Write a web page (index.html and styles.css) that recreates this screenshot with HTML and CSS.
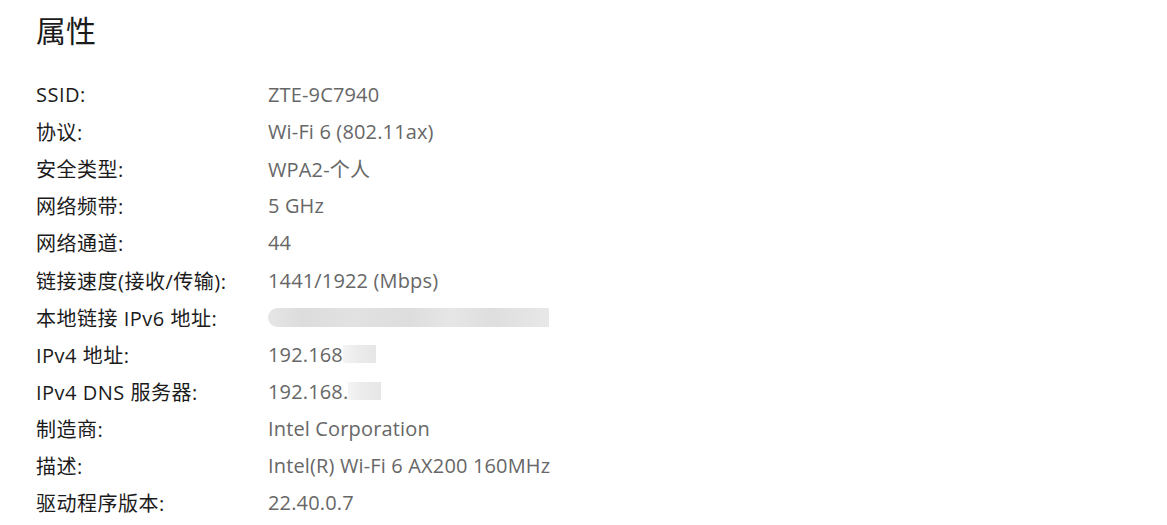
FILE: index.html
```html
<!DOCTYPE html>
<html lang="zh-CN">
<head>
<meta charset="utf-8">
<title>属性</title>
<link rel="stylesheet" href="styles.css">
</head>
<body>
<main class="panel">
  <h1 class="title">属性</h1>
  <dl class="props">
    <div class="row"><dt>SSID:</dt><dd>ZTE-9C7940</dd></div>
    <div class="row"><dt>协议:</dt><dd>Wi-Fi 6 (802.11ax)</dd></div>
    <div class="row"><dt>安全类型:</dt><dd>WPA2-个人</dd></div>
    <div class="row"><dt>网络频带:</dt><dd>5 GHz</dd></div>
    <div class="row"><dt>网络通道:</dt><dd>44</dd></div>
    <div class="row"><dt>链接速度(接收/传输):</dt><dd>1441/1922 (Mbps)</dd></div>
    <div class="row"><dt>本地链接 IPv6 地址:</dt><dd><span class="blur-long"></span></dd></div>
    <div class="row"><dt>IPv4 地址:</dt><dd>192.168<span class="blur-short"></span></dd></div>
    <div class="row"><dt>IPv4 DNS 服务器:</dt><dd>192.168.<span class="blur-short"></span></dd></div>
    <div class="row"><dt>制造商:</dt><dd>Intel Corporation</dd></div>
    <div class="row"><dt>描述:</dt><dd>Intel(R) Wi-Fi 6 AX200 160MHz</dd></div>
    <div class="row"><dt>驱动程序版本:</dt><dd>22.40.0.7</dd></div>
  </dl>
</main>
</body>
</html>
```

FILE: styles.css
```css
html, body {
  margin: 0;
  padding: 0;
  background: #ffffff;
}
body {
  font-family: "Open Sans", "Noto Sans", "Noto Sans CJK SC", sans-serif;
  color: #1b1b1b;
}
.panel {
  padding: 9px 0 0 36px;
}
.title {
  margin: 0;
  font-size: 30px;
  font-weight: 400;
  line-height: 40px;
  font-family: "Noto Sans CJK SC", sans-serif;
}
.props {
  margin: 27px 0 0 0;
  display: flex;
  flex-direction: column;
}
.row {
  display: grid;
  grid-template-columns: 232px 1fr;
  height: 37.1px;
  align-items: center;
  font-size: 20px;
}
dt {
  margin: 0;
  color: #1b1b1b;
  letter-spacing: 0.5px;
}
dd {
  margin: 0;
  color: #676767;
  display: flex;
  align-items: center;
  letter-spacing: 0.15px;
}
.blur-long {
  display: block;
  width: 281px;
  height: 19px;
  border-radius: 10px 0 0 10px;
  background: linear-gradient(90deg, #e6e6e6 0%, #dcdcdc 12%, #e2e2e2 30%, #dddddd 50%, #e6e6e6 65%, #dedede 80%, #e8e8e8 100%);
}
.blur-short {
  display: block;
  width: 33px;
  height: 18px;
  background: linear-gradient(90deg, #f4f4f4 0%, #ececec 40%, #e6e6e6 100%);
}
```
